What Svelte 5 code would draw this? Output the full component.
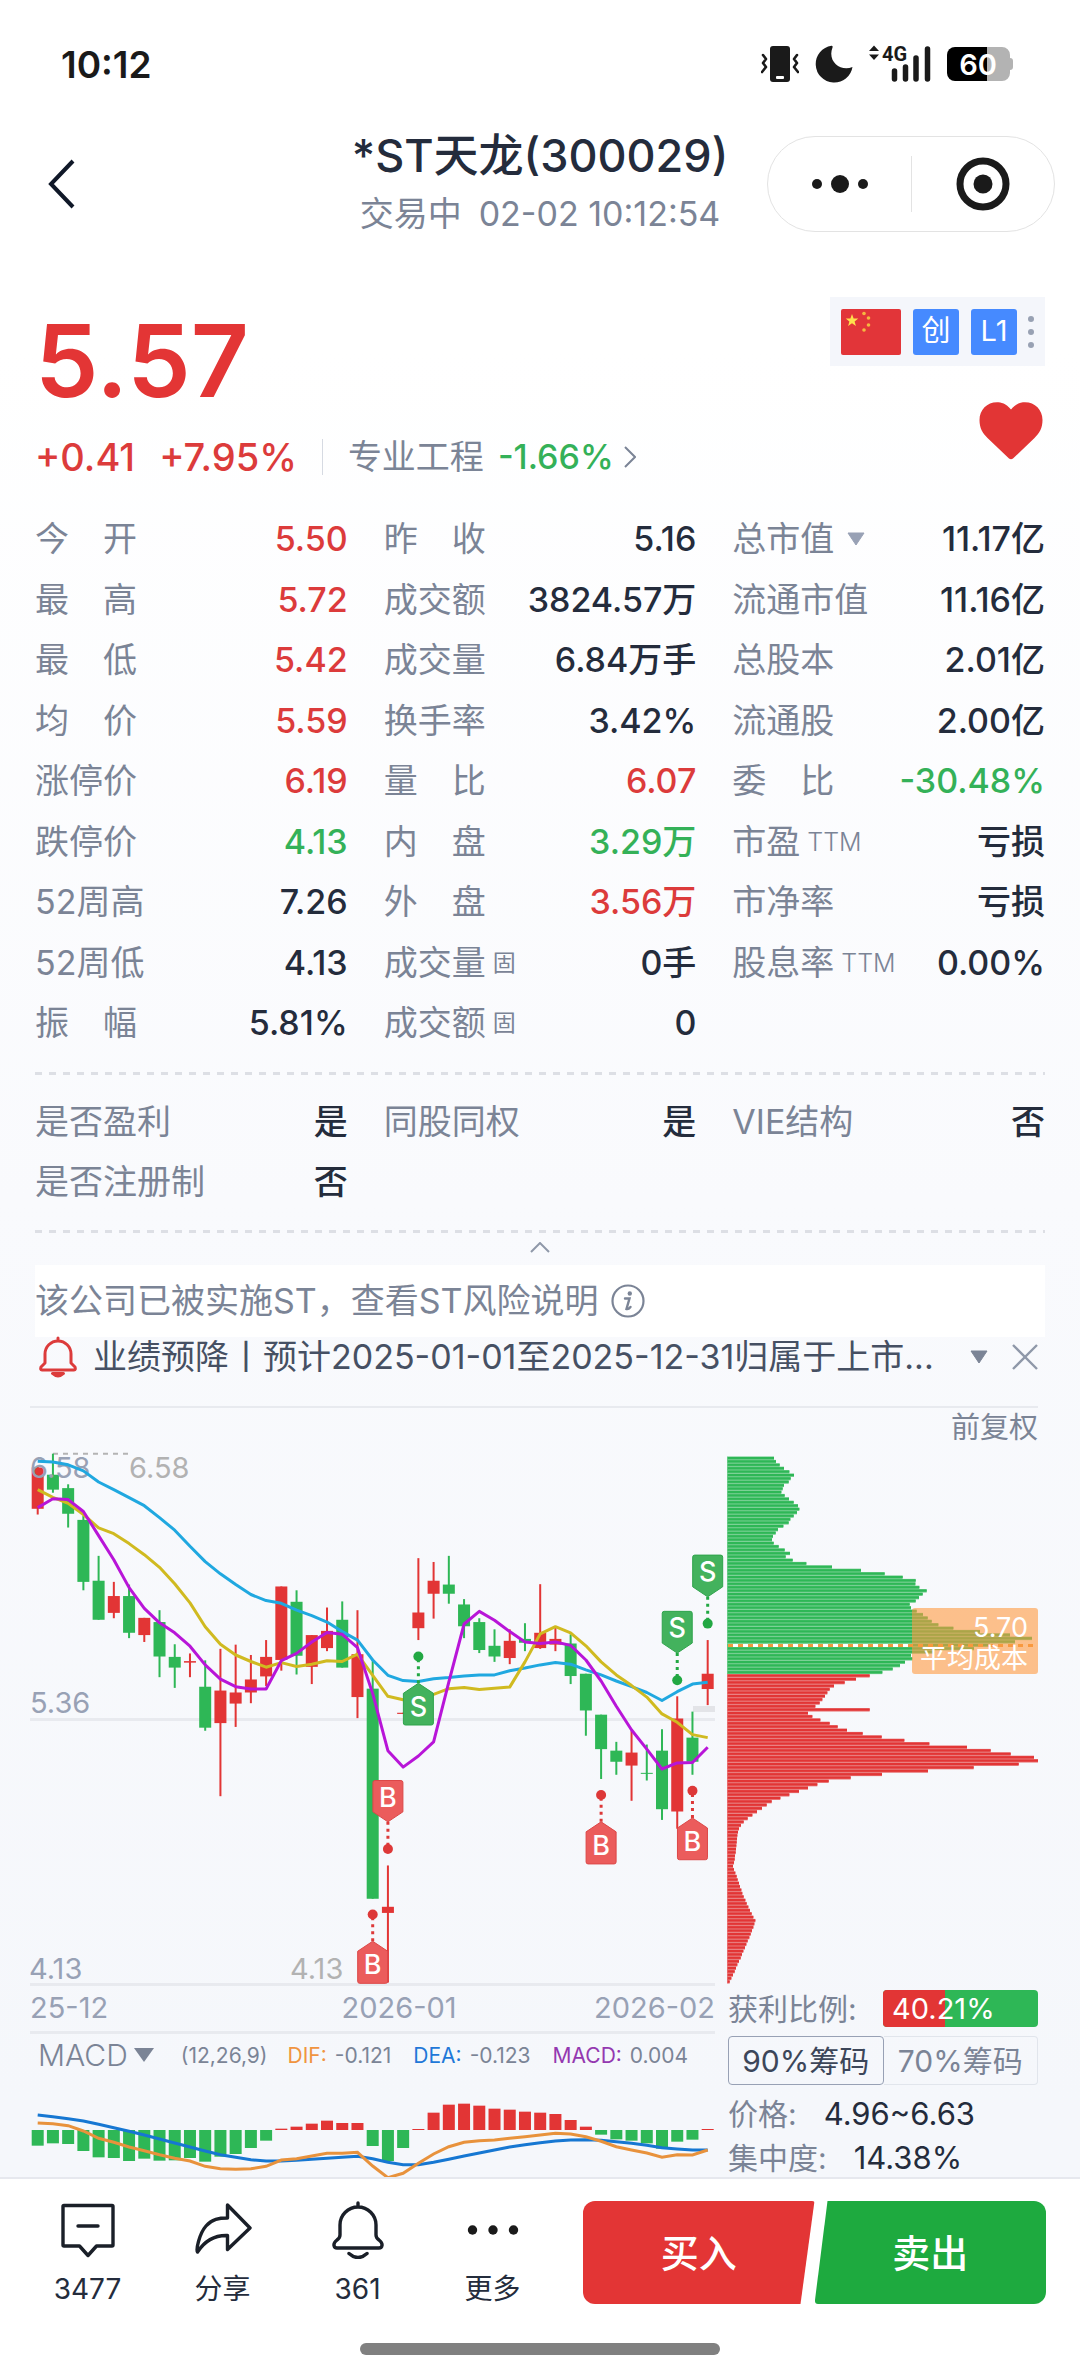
<script>
  const stats = [
    ['今　开', '5.50', 'up'], ['昨　收', '5.16', ''], ['总市值', '11.17亿', '', 'menu'],
    ['最　高', '5.72', 'up'], ['成交额', '3824.57万', ''], ['流通市值', '11.16亿', ''],
    ['最　低', '5.42', 'up'], ['成交量', '6.84万手', ''], ['总股本', '2.01亿', ''],
    ['均　价', '5.59', 'up'], ['换手率', '3.42%', ''], ['流通股', '2.00亿', ''],
    ['涨停价', '6.19', 'up'], ['量　比', '6.07', 'up'], ['委　比', '-30.48%', 'down'],
    ['跌停价', '4.13', 'down'], ['内　盘', '3.29万', 'down'], ['市盈', '亏损', '', 'TTM'],
    ['52周高', '7.26', ''], ['外　盘', '3.56万', 'up'], ['市净率', '亏损', ''],
    ['52周低', '4.13', ''], ['成交量', '0手', '', '固'], ['股息率', '0.00%', '', 'TTM'],
    ['振　幅', '5.81%', ''], ['成交额', '0', '', '固']
  ];
  const flags = [['是否盈利', '是'], ['同股同权', '是'], ['VIE结构', '否'], ['是否注册制', '否']];

  // Candles: direction, body top, body bottom, high, low (in plot ticks)
  const candles = [
    ['r', 124, 232, 120, 247], ['g', 143, 182, 88, 190], ['g', 178, 245, 168, 281], ['g', 261, 423, 250, 445],
    ['g', 420, 522, 355, 522], ['r', 460, 504, 423, 518], ['g', 460, 556, 430, 570], ['r', 517, 562, 517, 580],
    ['g', 528, 618, 497, 672], ['g', 619, 647, 586, 700], ['r', 630, 634, 610, 672], ['g', 697, 804, 628, 812],
    ['r', 707, 792, 598, 983], ['r', 712, 741, 587, 802], ['r', 678, 712, 614, 740], ['r', 619, 670, 575, 695],
    ['r', 435, 627, 435, 655], ['g', 475, 616, 445, 665], ['r', 562, 645, 562, 690], ['r', 551, 596, 490, 604],
    ['g', 522, 647, 474, 647], ['r', 612, 724, 497, 779], ['g', 702, 1251, 625, 1251], ['r', 1272, 1288, 1164, 1470],
    ['r', 765, 768, 765, 768], ['r', 503, 544, 361, 575], ['r', 420, 454, 371, 519], ['g', 430, 454, 355, 480],
    ['g', 482, 539, 468, 570], ['g', 528, 601, 518, 609], ['g', 590, 618, 547, 632], ['r', 577, 622, 547, 638],
    ['g', 572, 582, 531, 604], ['r', 556, 596, 429, 598], ['r', 572, 587, 540, 604], ['g', 584, 669, 560, 690],
    ['g', 663, 759, 663, 825], ['g', 770, 860, 770, 938], ['g', 864, 893, 841, 927], ['r', 869, 903, 812, 995],
    ['g', 922, 924, 848, 942], ['g', 864, 1017, 808, 1045], ['r', 780, 1023, 722, 1068], ['g', 830, 893, 762, 927],
    ['r', 663, 703, 575, 745]
  ];
  const averages = [
    ['#20a8e0', [108, 110, 117, 133, 162, 182, 203, 224, 255, 288, 330, 370, 402, 430, 456, 472, 479, 497, 511, 528, 553, 575, 627, 667, 681, 683, 676, 673, 669, 666, 666, 655, 648, 640, 634, 638, 653, 666, 682, 697, 712, 733, 710, 690, 685]],
    ['#d0ba20', [182, 202, 218, 247, 282, 297, 323, 352, 385, 428, 478, 540, 586, 614, 631, 646, 634, 644, 638, 629, 631, 612, 667, 722, 731, 728, 717, 702, 699, 704, 701, 698, 632, 559, 540, 556, 590, 632, 666, 694, 724, 768, 790, 822, 830]],
    ['#b815d8', [229, 206, 208, 239, 302, 365, 438, 492, 530, 556, 591, 640, 677, 697, 703, 703, 629, 610, 580, 555, 560, 595, 715, 864, 907, 878, 841, 685, 533, 500, 523, 553, 580, 584, 580, 589, 627, 682, 748, 810, 860, 912, 896, 895, 855]]
  ];
  // Trade markers: letter, candle index, badge flat edge, tip, dot
  const markers = [
    ['S', 25, 797, 688, 618], ['S', 42, 500, 609, 680], ['S', 44, 353, 462, 532],
    ['B', 23, 942, 1050, 1121], ['B', 22, 1472, 1362, 1292], ['B', 37, 1160, 1050, 980], ['B', 43, 1149, 1040, 969]
  ];
  const x = (i) => 37.7 + i * 15.227;
  const y = (t) => t / 2.613 - 27;

  const profile = [
    222, 228, 239, 252, 268, 282, 272, 266, 252, 248, 244, 254, 267, 281, 294, 298, 291, 281, 271, 266,
    250, 234, 227, 219, 216, 221, 236, 254, 270, 257, 278, 319, 396, 483, 554, 608, 647, 646, 658, 680,
    668, 657, 647, 629, 633, 650, 669, 683, 695, 715, 760, 840, 930, 996, 945, 870, 822, 700, 633, 637,
    615, 600, 578, 547,
    509, 468, 434, 402, 389, 382, 375, 367, 359, 346, 509, 324, 337, 361, 389, 413, 441, 488, 545, 613,
    688, 801, 872, 932, 1002, 1014, 956, 821, 684, 546, 452, 386, 352, 324, 297, 268, 241, 215, 200, 186,
    171, 157, 143, 131, 123, 117, 114, 112, 111, 110, 109, 108, 107, 105, 104, 102, 99, 102, 106, 110,
    113, 117, 120, 124, 127, 131, 136, 140, 145, 150, 155, 160, 166, 163, 160, 156, 152, 148, 143, 139,
    135, 130, 126, 122, 117, 112, 108, 104, 99, 94, 89
  ];
  const pitch = 527 / profile.length;
  const profitFrom = 64;

  // MACD histogram and lines; the zero axis sits at 390
  const hist = [437, 430, 432, 453, 472, 474, 483, 476, 482, 481, 474, 485, 470, 462, 444, 422, 386, 380, 371, 362, 369, 369, 438, 483, 444, 387, 338, 314, 311, 317, 326, 329, 335, 338, 342, 360, 380, 404, 418, 422, 430, 446, 425, 419, 387];
  const dea = [345, 350, 356, 363, 373, 383, 394, 405, 417, 429, 441, 453, 464, 472, 479, 483, 483, 481, 478, 475, 472, 469, 476, 487, 494, 494, 487, 478, 468, 459, 450, 441, 434, 428, 423, 420, 419, 421, 425, 430, 436, 443, 447, 450, 450];
  const dif = [369, 371, 377, 393, 415, 427, 441, 452, 464, 475, 483, 499, 506, 508, 506, 499, 480, 476, 468, 460, 460, 457, 498, 533, 520, 490, 462, 440, 427, 422, 420, 415, 410, 405, 400, 402, 410, 424, 440, 450, 459, 472, 464, 465, 450];
  const mx = (i) => 7.7 + i * 15.227;
  const my = (t) => t / 3 - 97;
  const line = (values, fx, fy) => values.map((v, i) => `${fx(i).toFixed(1)},${fy(v).toFixed(1)}`).join(' ');
  const badge = (cx, flat, tip) => {
    const s = tip > flat ? 1 : -1;
    const shoulder = tip - s * 10;
    return `M${cx - 13} ${flat}H${cx + 13}Q${cx + 15} ${flat} ${cx + 15} ${flat + s * 2}V${shoulder}L${cx} ${tip}L${cx - 15} ${shoulder}V${flat + s * 2}Q${cx - 15} ${flat} ${cx - 13} ${flat}Z`;
  };
</script>

<div class="page">
  <div class="status">
    <span class="clock">10:12</span>
    <div class="status-icons">
      <svg width="38" height="38" viewBox="0 0 38 38">
        <rect x="9" y="1" width="20" height="36" rx="3" fill="#1a1a1a" />
        <rect x="15" y="31" width="8" height="3" rx="1" fill="#fff" />
        <path d="M2 10l3 4-3 4 3 4-4 5M36 10l-3 4 3 4-3 4 4 5" fill="none" stroke="#1a1a1a" stroke-width="2.6" stroke-linejoin="round" stroke-linecap="round" />
      </svg>
      <svg width="38" height="38" viewBox="0 0 38 38">
        <path d="M16.500 .8A18.500 18.500 0 1 0 37.500 22C26 27 12 17 17.500 2.500Q18 .6 16.500 .8Z" fill="#1a1a1a" />
      </svg>
      <svg class="signal" width="62" height="38" viewBox="0 0 62 38">
        <path d="M5 .5l5 5.500H0zM5 15l5-5.500H0z" fill="#1a1a1a" />
        <text x="13" y="16" class="net">4G</text>
        <path d="M25.500 26v8M36.500 22v12M47 13v21M58.500 4v30" stroke="#1a1a1a" stroke-width="5.500" stroke-linecap="round" />
      </svg>
      <svg width="66" height="34" viewBox="0 0 66 34">
        <path d="M40 0H55a8 8 0 0 1 8 8V11a3 3 0 0 1 3 3v6a3 3 0 0 1-3 3v3a8 8 0 0 1-8 8H40z" fill="#b3b3b3" />
        <path d="M8 0H40V34H8a8 8 0 0 1-8-8V8a8 8 0 0 1 8-8z" fill="#000" />
        <text x="31" y="28" text-anchor="middle" class="battery">60</text>
      </svg>
    </div>
  </div>

  <header class="nav">
    <button class="back" aria-label="返回">
      <svg width="28" height="52" viewBox="0 0 28 52"><path d="M25 3L3 26l22 23" fill="none" stroke="#101828" stroke-width="4" /></svg>
    </button>
    <div class="heading">
      <h1>*ST天龙(300029)</h1>
      <p>交易中&ensp;02-02 10:12:54</p>
    </div>
    <div class="capsule">
      <button aria-label="更多操作">
        <svg width="58" height="20" viewBox="0 0 58 20" fill="#1a1a1a"><circle cx="6" cy="10" r="5" /><circle cx="29" cy="10" r="9" /><circle cx="52" cy="10" r="5" /></svg>
      </button>
      <button aria-label="关闭">
        <svg width="54" height="54" viewBox="0 0 54 54"><circle cx="27" cy="27" r="23" fill="none" stroke="#1a1a1a" stroke-width="7" /><circle cx="27" cy="27" r="9.500" fill="#1a1a1a" /></svg>
      </button>
    </div>
  </header>

  <main>
    <section class="quote">
      <div>
        <div class="price">5.57</div>
        <div class="change">
          <span class="up">+0.41</span>
          <span class="up pct">+7.95%</span>
          <a href="#sector" class="sector">专业工程 <b>-1.66%</b>
            <svg width="12" height="22" viewBox="0 0 12 22"><path d="M1 1l10 10L1 21" fill="none" stroke="#7b8496" stroke-width="2" /></svg>
          </a>
        </div>
      </div>
      <div class="side">
        <button class="tags" aria-label="标签">
          <svg width="60" height="46" viewBox="0 0 60 46">
            <rect width="60" height="46" rx="2" fill="#e23539" />
            <path d="M11 5l1.600 4.400 4.700.1-3.700 2.900 1.300 4.500-3.900-2.600-3.900 2.600 1.300-4.500L4.700 9.500l4.700-.1z" fill="#ffe04d" />
            <g fill="#f5b840"><circle cx="23" cy="4.500" r="1.800" /><circle cx="27.500" cy="9" r="1.800" /><circle cx="27.500" cy="16" r="1.800" /><circle cx="23" cy="21" r="1.800" /></g>
          </svg>
          <span class="tag">创</span>
          <span class="tag">L1</span>
          <svg class="kebab" width="6" height="34" viewBox="0 0 6 34" fill="#98a1b3"><circle cx="3" cy="4" r="3" /><circle cx="3" cy="17" r="3" /><circle cx="3" cy="30" r="3" /></svg>
        </button>
        <button class="heart" aria-label="自选">
          <svg width="64" height="58" viewBox="0 0 64 58"><path d="M32 7.500C37 1.500 42 .3 46 .3 56 .3 63.500 8 63.500 18c0 8-3 13-8 18L34 56.500q-2 1.500-4 0L8.500 36C3.500 31 .5 26 .5 18 .5 8 8 .3 18 .3c4 0 9 1.200 14 7.200z" fill="#e23535" /></svg>
        </button>
      </div>
    </section>

    <dl class="stats main-stats">
      {#each stats as [label, value, tone, extra]}
        <div>
          <dt>{label}{#if extra === 'menu'}<svg class="tri" width="18" height="14" viewBox="0 0 18 14"><path d="M1 1h16L9 13z" fill="#98a1b5" stroke="#98a1b5" stroke-linejoin="round" /></svg>{:else if extra}<small class:solid={extra === '固'}>{extra}</small>{/if}</dt>
          <dd class={tone}>{value}</dd>
        </div>
      {/each}
    </dl>
    <div class="dashes"></div>
    <dl class="stats flags">
      {#each flags as [label, value]}
        <div><dt>{label}</dt><dd>{value}</dd></div>
      {/each}
    </dl>
    <div class="dashes"></div>
    <button class="fold" aria-label="收起">
      <svg width="20" height="11" viewBox="0 0 20 11"><path d="M1 10l9-9 9 9" fill="none" stroke="#8f98a9" stroke-width="2" /></svg>
    </button>

    <a class="risk" href="#risk"><span>该公司已被实施ST，查看ST风险说明</span>
      <svg width="34" height="34" viewBox="0 0 34 34"><circle cx="17" cy="17" r="15.500" fill="none" stroke="#7b8496" stroke-width="2.200" /><circle cx="18.800" cy="9.500" r="2.200" fill="#7b8496" /><path d="M14 14.500h4.500L15.500 25q2 .5 4-2" fill="none" stroke="#7b8496" stroke-width="2.400" stroke-linecap="round" /></svg>
    </a>

    <div class="alert">
      <svg width="40" height="42" viewBox="0 0 40 42" fill="none" stroke="#dc3b3b" stroke-width="3" stroke-linecap="round" stroke-linejoin="round">
        <path d="M20 2v3M7 27V18a13 13 0 0 1 26 0v9l4 4q1 3-1 3H4q-2 0-1-3z" /><path d="M14.500 37.500h11q-5.500 5-11 0z" fill="#dc3b3b" />
      </svg>
      <span class="news">业绩预降丨预计2025-01-01至2025-12-31归属于上市...</span>
      <button aria-label="展开"><svg width="18" height="14" viewBox="0 0 18 14"><path d="M1 1h16L9 13z" fill="#7b8496" stroke="#7b8496" stroke-linejoin="round" /></svg></button>
      <button aria-label="关闭提醒"><svg width="26" height="26" viewBox="0 0 26 26"><path d="M1 1l24 24M25 1L1 25" stroke="#8f98a9" stroke-width="2.400" /></svg></button>
    </div>

    <div class="adjust"><button>前复权</button></div>

    <svg class="plot" viewBox="0 0 1080 540" role="img" aria-label="日K线与筹码分布">
      <path d="M30 272.500H715M30 537.500H715" stroke="#e8eaef" stroke-width="3" />
      <rect x="693" y="259" width="22" height="6" fill="#e3e4e8" />
      <path d="M53 6.800H128" stroke="#b4b4b4" stroke-width="2" stroke-dasharray="5 5" />
      {#each candles as [dir, top, bottom, high, low], i}
        <g class={dir === 'r' ? 'red' : 'green'}>
          <rect x={x(i) - 1} y={y(high)} width="2" height={y(low) - y(high)} />
          <rect x={x(i) - 6} y={y(top)} width="12" height={Math.max(1, y(bottom) - y(top))} />
        </g>
      {/each}
      <g class="axis">
        <text x="30" y="31">6.58</text>
        <text x="30" y="266">5.36</text>
        <text x="29" y="532">4.13</text>
        <text x="129" y="31" class="pale">6.58</text>
        <text x="290" y="532" class="pale">4.13</text>
      </g>
      {#each averages as [color, values]}
        <polyline points={line(values, x, y)} fill="none" stroke={color} stroke-width="3" stroke-linejoin="round" />
      {/each}
      {#each markers as [kind, i, flat, tip, dot]}
        <g class={kind === 'B' ? 'buy-mark' : 'sell-mark'}>
          <line x1={x(i)} x2={x(i)} y1={y(tip)} y2={y(dot)} />
          <circle cx={x(i)} cy={y(dot)} r="5" />
          <path d={badge(x(i), y(flat), y(tip))} />
          <text x={x(i)} y={(tip > flat ? y(flat) + 17 : y(flat) - 18) + 9} text-anchor="middle">{kind}</text>
        </g>
      {/each}

      {#each profile as v, i}
        <g class={i < profitFrom ? 'green' : 'red'}>
          <rect x="727" y={9.5 + i * pitch} width={(v - 81) / 3} height={pitch} opacity="0.75" />
          <rect x="728" y={10 + i * pitch} width={(v - 84) / 3} height="2" />
        </g>
      {/each}
      <path d="M728 198.500H912" stroke="#fff" stroke-width="3" />
      <path d="M728 198.500H1038" stroke="#f09a3c" stroke-width="3" stroke-dasharray="5 5" />
      <rect x="912" y="161" width="126" height="66" rx="3" fill="#ff9a40" opacity="0.600" />
      <g class="cost"><text x="1028" y="190">5.70</text><text x="1028" y="221">平均成本</text></g>
    </svg>

    <section class="lower">
      <div class="left">
        <div class="dates"><span>25-12</span><span>2026-01</span><span>2026-02</span></div>
        <div class="macd-head">
          <button class="macd-name">MACD <svg width="20" height="14" viewBox="0 0 20 14"><path d="M0 0h20L10 14z" fill="#7b8496" /></svg></button>
          <span class="params">(12,26,9)</span>
          <span class="dif"><i>DIF:</i>-0.121</span>
          <span class="dea"><i>DEA:</i>-0.123</span>
          <span class="bar"><i>MACD:</i>0.004</span>
        </div>
        <svg class="macd" viewBox="0 0 685 80" role="img" aria-label="MACD">
          {#each hist as v, i}
            <rect class={v < 390 ? 'red' : 'green'} x={mx(i) - 6} y={Math.min(my(v), 33)} width="12" height={Math.abs(my(v) - 33)} />
          {/each}
          <polyline points={line(dea, mx, my)} fill="none" stroke="#1677d2" stroke-width="3" />
          <polyline points={line(dif, mx, my)} fill="none" stroke="#e8923c" stroke-width="3" />
        </svg>
      </div>
      <div class="chips">
        <div class="ratio"><span>获利比例:</span><div class="meter"><div class="fill" style:width="40.21%"></div><span>40.21%</span></div></div>
        <div class="tabs"><button class="on">90%筹码</button><button>70%筹码</button></div>
        <div class="pair"><span>价格:</span><b>4.96~6.63</b></div>
        <div class="pair"><span>集中度:</span><b>14.38%</b></div>
      </div>
    </section>
  </main>

  <footer>
    <div class="actions">
      <button class="tool">
        <svg width="58" height="58" viewBox="0 0 58 58"><path d="M5 4.500h48a1 1 0 0 1 1 1V44a1 1 0 0 1-1 1H37.500L29 54.500 20.500 45H5a1 1 0 0 1-1-1V5.500a1 1 0 0 1 1-1zM19 25h20" /></svg>
        <span>3477</span>
      </button>
      <button class="tool">
        <svg width="58" height="58" viewBox="0 0 58 58"><path d="M33.500 4L56 27 33.500 48.500V34.500C20 34 10 41 3.500 51 2 49 5 33 12 25 18 18 25 17 33.500 17z" /></svg>
        <span>分享</span>
      </button>
      <button class="tool">
        <svg width="58" height="58" viewBox="0 0 58 58"><path d="M29 2v3M11 24a18 18 0 0 1 36 0V34q0 3 3 5c5 4 3 8 0 8H8c-3 0-5-4 0-8q3-2 3-5zM20 52.500q9 8 18 0" /></svg>
        <span>361</span>
      </button>
      <button class="tool">
        <svg width="58" height="58" viewBox="0 0 58 58" class="dots"><circle cx="8.500" cy="29" r="4.700" /><circle cx="29" cy="29" r="4.700" /><circle cx="49.500" cy="29" r="4.700" /></svg>
        <span>更多</span>
      </button>
      <div class="trade">
        <button class="buy">买入</button>
        <button class="sell">卖出</button>
      </div>
    </div>
    <div class="home"></div>
  </footer>
</div>

<style>
  :global(body) { margin: 0; background: #fff; }
  .page {
    font-family: Inter, 'Noto Sans CJK SC', sans-serif;
    color: #242c3c;
    min-height: 100vh;
    display: flex;
    flex-direction: column;
    background: linear-gradient(#fff 350px, #f9fafd 1200px, #f5f7fb 2100px);
  }
  button { font: inherit; color: inherit; background: none; border: 0; padding: 0; margin: 0; display: flex; align-items: center; justify-content: center; }
  svg { display: block; flex: none; }
  a { color: inherit; text-decoration: none; }
  dl, dd, h1, p { margin: 0; }

  .status { height: 128px; padding: 0 67px 0 61px; display: flex; align-items: center; justify-content: space-between; }
  .clock { font-size: 37px; font-weight: 600; color: #1a1a1a; }
  .status-icons { display: flex; align-items: center; gap: 16px; }
  .signal { overflow: visible; }
  .net { font: 700 20px Roboto, sans-serif; fill: #1a1a1a; }
  .battery { font: 600 29px Inter, sans-serif; fill: #fff; }

  .nav { display: grid; grid-template-columns: 288px 1fr 288px; align-items: center; padding: 0 25px 0 48px; height: 112px; }
  .back { justify-self: start; width: 28px; height: 52px; }
  .heading { text-align: center; display: flex; flex-direction: column; gap: 8px; margin-left: -23px; white-space: nowrap; }
  h1 { font-size: 45px; line-height: 52px; font-weight: 500; }
  .heading p { font-size: 34px; line-height: 48px; color: #7b8496; }
  .capsule { display: flex; height: 94px; border: 1px solid #e3e3e3; border-radius: 48px; background: #fff; position: relative; }
  .capsule button { flex: 1; }
  .capsule button + button::before { content: ''; width: 1px; height: 56px; background: #e3e3e3; position: absolute; left: 50%; }

  main { flex: 1; padding-top: 57px; }
  .quote { display: flex; justify-content: space-between; padding: 0 35px; }
  .price { font-size: 101px; line-height: 126px; font-weight: 600; color: #e33535; }
  .change { display: flex; align-items: center; height: 68px; font-size: 38px; font-weight: 500; }
  .pct { margin-left: 24px; }
  .sector { display: flex; align-items: center; gap: 14px; margin-left: 25px; padding-left: 25px; border-left: 1px solid #d6dae2; height: 36px; font-size: 34px; line-height: 36px; font-weight: 400; color: #7b8496; }
  .sector b { font-weight: 500; color: #34b158; font-size: 34px; }
  .sector svg { margin-left: -4px; }
  .side { display: flex; flex-direction: column; align-items: flex-end; gap: 36px; }
  .tags { background: #f4f6fb; height: 69px; width: 215px; gap: 12px; }
  .tag { width: 46px; height: 46px; border-radius: 3px; background: #468aff; color: #fff; font-size: 29px; line-height: 44px; text-align: center; }
  .kebab { margin-left: -1px; }
  .heart { margin-right: 2px; }

  .stats { display: grid; grid-template-columns: repeat(3, 1fr); column-gap: 36px; padding: 0 35px; }
  .main-stats { padding-top: 18px; grid-template-rows: repeat(4, 60px 61px) 60px; }
  .flags { grid-auto-rows: 60px; padding-top: 17px; }
  .stats div { display: flex; align-items: center; justify-content: space-between; }
  dt, dd { font-size: 34px; line-height: 48px; }
  dt { color: #7b8496; display: flex; align-items: center; }
  dd { font-weight: 500; }
  dt small { font-size: 25px; font-weight: 300; margin-left: 7px; }
  dt small.solid { font-size: 23px; font-weight: 400; }
  .tri { margin-left: 13px; }
  .up { color: #dc3b3b; }
  .down { color: #34b158; }
  .dashes { margin: 19px 35px 0; height: 3px; background: repeating-linear-gradient(90deg, #dddfe5 0 7px, transparent 7px 14px); }
  .flags + .dashes { margin-top: 18px; }
  .fold { width: 100%; height: 32px; padding-bottom: 4px; box-sizing: border-box; }

  .risk { display: flex; align-items: center; gap: 12px; height: 72px; margin: 0 35px; background: #fff; font-size: 34px; line-height: 48px; color: #7b8496; }
  .alert { display: flex; align-items: center; margin: 0 42px 0 30px; padding: 0 0 29px 8px; height: 40px; border-bottom: 2px solid #e8eaef; font-size: 34px; color: #465063; }
  .news { flex: 1; margin-left: 15px; white-space: nowrap; overflow: hidden; line-height: 48px; }
  .alert button { margin-left: 24px; }
  .adjust { display: flex; justify-content: flex-end; padding-right: 42px; height: 39px; font-size: 29px; line-height: 40px; color: #7b8496; }

  .plot { width: 100%; height: auto; }
  .red { fill: #e23535; }
  .green { fill: #2eb756; }
  .axis text { font-size: 29px; fill: #98a1b5; }
  .axis text.pale { fill: #b2b2b2; }
  .cost text { font-size: 27px; fill: #fff; text-anchor: end; }
  .buy-mark path { fill: #eb5c5c; stroke: #dc4747; }
  .sell-mark path { fill: #43b25d; stroke: #2ea34b; }
  .buy-mark circle { fill: #dd3838; }
  .sell-mark circle { fill: #22a843; }
  .buy-mark line { stroke: #dd3838; stroke-width: 3; stroke-dasharray: 3 4; }
  .sell-mark line { stroke: #22a843; stroke-width: 3; stroke-dasharray: 3 4; }
  .buy-mark text, .sell-mark text { fill: #fff; font-size: 27px; font-weight: 500; }

  .lower { display: grid; grid-template-columns: 685fr 310fr; column-gap: 13px; padding: 0 42px 0 30px; height: 190px; }
  .dates { display: flex; justify-content: space-between; align-items: center; height: 40px; padding-bottom: 4px; border-bottom: 3px solid #e8eaef; font-size: 29px; color: #98a1b5; }
  .dates span:nth-child(2) { margin-left: 96px; }
  .macd-head { display: flex; align-items: center; height: 42px; padding-left: 8px; font-size: 21px; color: #7b8496; white-space: nowrap; }
  .macd-name { font-size: 30px; gap: 6px; font-weight: 300; }
  .params { margin-left: 27px; }
  .macd-head i { font-style: normal; margin-right: 8px; }
  .dif, .dea, .bar { margin-left: 22px; }
  .dif { margin-left: 20px; }
  .dif i { color: #f09440; }
  .dea i { color: #1f78d8; }
  .bar i { color: #9438b0; }
  .macd { width: 100%; height: auto; margin-top: 21px; }

  .chips { font-size: 30px; line-height: 36px; color: #7b8496; }
  .ratio { display: flex; justify-content: space-between; align-items: center; height: 43px; }
  .meter { position: relative; width: 50%; height: 37px; border-radius: 4px; overflow: hidden; background: #2eb756; display: flex; align-items: center; }
  .fill { position: absolute; inset: 0 auto 0 0; background: #e23535; }
  .meter span { position: relative; color: #fff; padding-left: 9px; font-size: 29px; }
  .tabs { display: flex; margin-top: 6px; height: 49px; }
  .tabs button { flex: 1; border: 1px solid #e1e5ec; border-left: 0; border-radius: 0 4px 4px 0; }
  .tabs .on { color: #3c4659; border: 1px solid #98a1b5; border-radius: 4px; }
  .pair { display: flex; gap: 27px; align-items: center; height: 36px; margin-bottom: 8px; }
  .tabs + .pair { margin-top: 11px; }
  .pair b { font-weight: 400; color: #242c3c; font-size: 31px; }

  footer { background: #fff; border-top: 2px solid #e6e8ee; height: 197px; }
  .actions { display: flex; padding: 22px 34px 0 20px; }
  .tool { flex-direction: column; width: 135px; height: 106px; gap: 12px; font-size: 28px; line-height: 36px; justify-content: flex-start; }
  .tool svg { fill: none; stroke: #1a1f28; stroke-width: 3.400; stroke-linejoin: round; stroke-linecap: round; }
  .tool svg.dots { fill: #1a1a1a; stroke: none; }
  .trade { flex: 1; display: flex; margin-left: 23px; font-size: 38px; line-height: 48px; font-weight: 500; color: #fff; }
  .trade button { flex: 1; height: 103px; }
  .buy { background: #e33535; border-radius: 12px 3px 3px 12px; clip-path: polygon(0 0, 100% 0, calc(100% - 14px) 100%, 0 100%); }
  .sell { background: #1eaa3f; border-radius: 3px 12px 12px 3px; clip-path: polygon(13px 0, 100% 0, 100% 100%, 0 100%); }
  .home { width: 360px; height: 12px; border-radius: 6px; background: #808080; margin: 36px auto 0; }
</style>
